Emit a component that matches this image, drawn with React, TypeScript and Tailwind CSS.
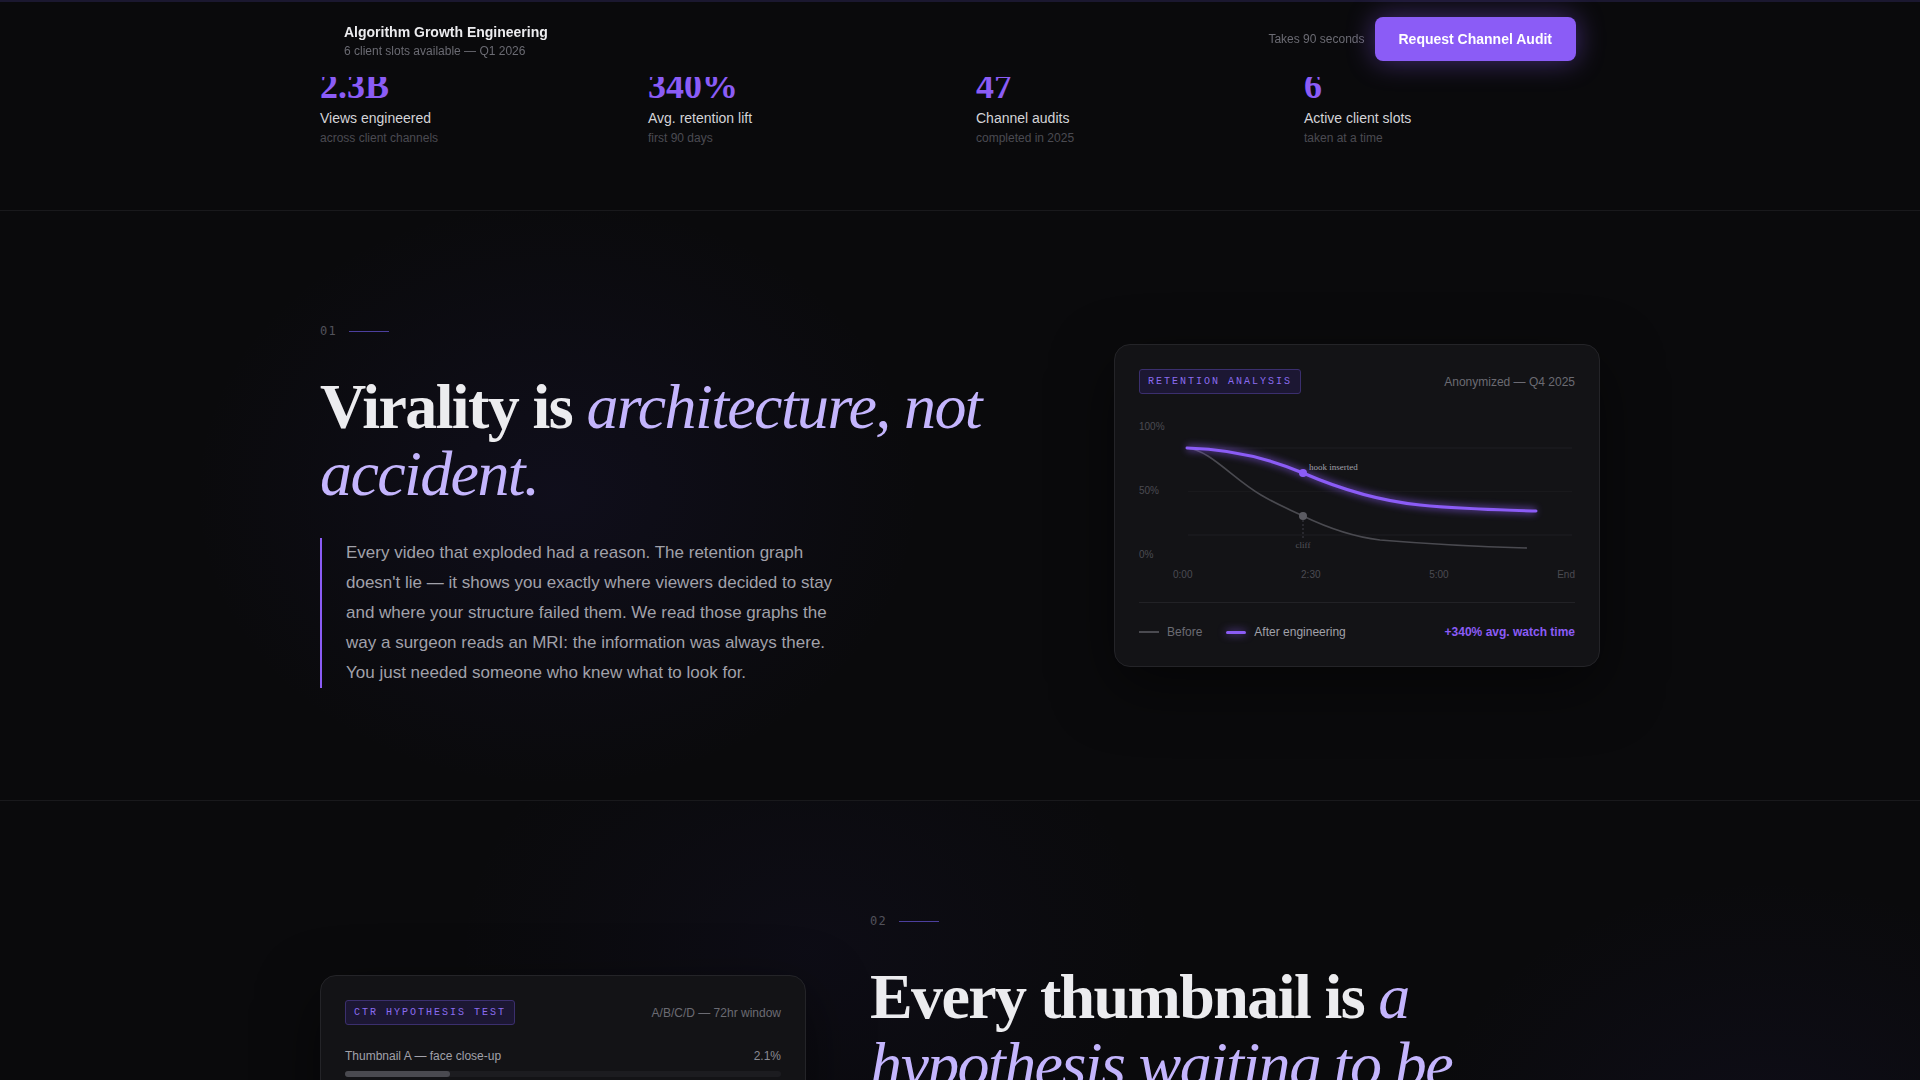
import React from "react";

const stats = [
  { value: "2.3B", label: "Views engineered", sub: "across client channels" },
  { value: "340%", label: "Avg. retention lift", sub: "first 90 days" },
  { value: "47", label: "Channel audits", sub: "completed in 2025" },
  { value: "6", label: "Active client slots", sub: "taken at a time" },
];

const thumbs = [
  { name: "Thumbnail A — face close-up", ctr: "2.1%", pct: 24, win: false },
  { name: "Thumbnail B — text overlay", ctr: "3.4%", pct: 38, win: false },
  { name: "Thumbnail C — contrast split", ctr: "5.2%", pct: 57, win: false },
  { name: "Thumbnail D — curiosity gap", ctr: "9.1%", pct: 100, win: true },
];

function SectionLabel({ n }: { n: string }) {
  return (
    <div className="flex items-center gap-3">
      <span className="font-['DejaVu_Sans_Mono',monospace] text-[12px] leading-4 tracking-[0.1em] text-[#52525b]">
        {n}
      </span>
      <span className="h-px w-10 bg-[#4c3f9e]" />
    </div>
  );
}

function Badge({ children }: { children: React.ReactNode }) {
  return (
    <span className="inline-block rounded-[3px] border border-[#3b2f6e] bg-[#1c1733] px-2 py-1 font-['Liberation_Mono',monospace] text-[10px] leading-[15px] tracking-[0.2em] text-[#8b6cf0]">
      {children}
    </span>
  );
}

function RetentionChart() {
  return (
    <div className="mt-[27px]">
      <div className="flex">
        <div className="flex h-[140px] w-[34px] flex-col justify-between text-[10px] leading-3 text-[#4b4b52]">
          <span>100%</span>
          <span>50%</span>
          <span>0%</span>
        </div>
        <svg width="402" height="140" viewBox="0 0 402 140" className="block">
          <defs>
            <filter id="glow" x="-20%" y="-50%" width="140%" height="200%">
              <feGaussianBlur stdDeviation="3.5" />
            </filter>
          </defs>
          <line x1="15" y1="27" x2="399" y2="27" stroke="#1f1f23" strokeWidth="1" />
          <line x1="15" y1="70.5" x2="399" y2="70.5" stroke="#19191c" strokeWidth="1" />
          <line x1="15" y1="114" x2="399" y2="114" stroke="#1f1f23" strokeWidth="1" />
          {/* before */}
          <path
            d="M14,27 C37,29 60,58 88,74 C105,84 120,90 130,95 C157,108 182,116 207,119 C267,124 317,126 354,127"
            fill="none"
            stroke="#4a4a50"
            strokeWidth="1.6"
          />
          <line x1="130" y1="99" x2="130" y2="117" stroke="#3f3f46" strokeWidth="1" strokeDasharray="2 2" />
          <circle cx="130" cy="95" r="4" fill="#5b5b62" />
          <text
            x="130"
            y="127"
            textAnchor="middle"
            fontFamily="'Liberation Serif', serif"
            fontSize="9"
            fill="#55555c"
          >
            cliff
          </text>
          {/* after */}
          <path
            d="M14,27 C57,28 97,38 130,52 C167,68 207,80 247,84 C287,88 327,89 363,90"
            fill="none"
            stroke="#8b5cf6"
            strokeWidth="6"
            opacity="0.55"
            filter="url(#glow)"
          />
          <path
            d="M14,27 C57,28 97,38 130,52 C167,68 207,80 247,84 C287,88 327,89 363,90"
            fill="none"
            stroke="#8b5cf6"
            strokeWidth="3"
            strokeLinecap="round"
          />
          <circle cx="130" cy="52" r="4" fill="#8b5cf6" />
          <text
            x="136"
            y="49"
            fontFamily="'Liberation Serif', serif"
            fontSize="9"
            fill="#a1a1aa"
          >
            hook inserted
          </text>
        </svg>
      </div>
      <div className="mt-2 flex justify-between pl-[34px] text-[10px] leading-3 text-[#4b4b52]">
        <span>0:00</span>
        <span>2:30</span>
        <span>5:00</span>
        <span>End</span>
      </div>
    </div>
  );
}

function RetentionCard() {
  return (
    <div className="rounded-2xl border border-[#242428] bg-[#131316] p-6 shadow-[0_20px_60px_rgba(0,0,0,0.5)]">
      <div className="flex items-center justify-between">
        <Badge>RETENTION ANALYSIS</Badge>
        <span className="text-[12px] text-[#6b6b73]">Anonymized — Q4 2025</span>
      </div>
      <RetentionChart />
      <div className="mt-[21px] flex items-center justify-between border-t border-[#222226] pt-[19px]">
        <div className="flex items-center gap-6">
          <div className="flex items-center gap-2">
            <span className="h-0.5 w-5 bg-[#4a4a50]" />
            <span className="text-[12px] leading-5 text-[#6b6b73]">Before</span>
          </div>
          <div className="flex items-center gap-2">
            <span className="h-[3px] w-5 rounded-full bg-[#8b5cf6] shadow-[0_0_8px_rgba(139,92,246,0.8)]" />
            <span className="text-[12px] leading-5 text-[#a1a1aa]">After engineering</span>
          </div>
        </div>
        <span className="text-[12px] font-bold leading-5 text-[#8b5cf6]">+340% avg. watch time</span>
      </div>
    </div>
  );
}

function CtrCard() {
  return (
    <div className="mt-[62px] rounded-2xl border border-[#242428] bg-[#131316] p-6 shadow-[0_20px_60px_rgba(0,0,0,0.5)]">
      <div className="flex items-center justify-between">
        <Badge>CTR HYPOTHESIS TEST</Badge>
        <span className="text-[12px] text-[#6b6b73]">A/B/C/D — 72hr window</span>
      </div>
      <div className="mt-[23px] flex flex-col gap-3">
        {thumbs.map((t) => (
          <div key={t.name}>
            <div className="flex items-center justify-between text-[12px] leading-4">
              <span className={t.win ? "text-[#c4b5fd]" : "text-[#a1a1aa]"}>{t.name}</span>
              <span className={t.win ? "font-bold text-[#8b5cf6]" : "text-[#8a8a92]"}>{t.ctr}</span>
            </div>
            <div className="mt-[7px] h-1.5 w-full rounded-full bg-[#1c1c20]">
              <div
                className={t.win ? "h-full rounded-full bg-[#8b5cf6]" : "h-full rounded-full bg-[#4a4a50]"}
                style={{ width: `${t.pct}%` }}
              />
            </div>
          </div>
        ))}
      </div>
    </div>
  );
}

export default function App() {
  return (
    <div className="relative h-[1080px] overflow-hidden bg-[#0a0a0c] font-['Liberation_Sans',Arial,sans-serif] text-[#e4e4e7]">
      {/* fixed top bar */}
      <header className="absolute inset-x-0 top-0 z-20 border-t-2 border-[#1b1830] bg-[#0a0a0c]/[0.97] backdrop-blur">
        <div className="mx-auto flex max-w-[1280px] items-center justify-between px-6 pb-4 pt-[15px]">
          <div className="pt-[3px]">
            <div className="text-[14px] font-bold leading-5 text-[#ececef]">Algorithm Growth Engineering</div>
            <div className="mt-px text-[12px] leading-4 text-[#6b6b73]">6 client slots available — Q1 2026</div>
          </div>
          <div className="flex items-center gap-[10px]">
            <span className="text-[12px] text-[#6b6b73]">Takes 90 seconds</span>
            <button className="h-11 rounded-lg bg-[#8b5cf6] px-6 text-[14px] font-bold text-white shadow-[0_0_28px_rgba(139,92,246,0.45)]">
              Request Channel Audit
            </button>
          </div>
        </div>
      </header>

      {/* stats */}
      <section className="border-b border-[#19191c]">
        <div className="mx-auto grid max-w-[1280px] grid-cols-4 gap-8 pb-16 pt-[68px]">
          {stats.map((s) => (
            <div key={s.label}>
              <div className="font-['Liberation_Serif',serif] text-[36px] font-bold leading-9 text-[#8b5cf6]">
                {s.value}
              </div>
              <div className="mt-[4px] text-[14px] leading-5 text-[#d4d4d8]">{s.label}</div>
              <div className="mt-[2px] text-[12px] leading-4 text-[#4b4b52]">{s.sub}</div>
            </div>
          ))}
        </div>
      </section>

      {/* 01 */}
      <section className="border-b border-[#19191c] bg-[radial-gradient(ellipse_520px_420px_at_29%_48%,rgba(60,48,150,0.11),transparent_70%)]">
        <div className="mx-auto grid max-w-[1280px] grid-cols-[1fr_486px] items-center gap-16 py-28">
          <div>
            <SectionLabel n="01" />
            <h2 className="mt-[34px] font-['Liberation_Serif',serif] text-[64px] leading-[1.05] tracking-[-0.025em]">
              <span className="font-bold text-[#ececef]">Virality is </span>
              <em className="font-normal text-[#c4b5fd]">architecture, not accident.</em>
            </h2>
            <p className="mt-[31px] max-w-[526px] border-l-2 border-[#8b5cf6] pl-6 text-[17px] leading-[30px] text-[#a1a1aa]">
              Every video that exploded had a reason. The retention graph doesn't lie — it shows you exactly where
              viewers decided to stay and where your structure failed them. We read those graphs the way a surgeon
              reads an MRI: the information was always there. You just needed someone who knew what to look for.
            </p>
          </div>
          <RetentionCard />
        </div>
      </section>

      {/* 02 */}
      <section className="bg-[radial-gradient(ellipse_500px_380px_at_42%_25%,rgba(60,48,150,0.07),transparent_70%),radial-gradient(ellipse_500px_400px_at_92%_60%,rgba(60,48,150,0.09),transparent_70%)]">
        <div className="mx-auto grid max-w-[1280px] grid-cols-[486px_1fr] items-start gap-16 py-28">
          <CtrCard />
          <div>
            <SectionLabel n="02" />
            <h2 className="mt-[34px] font-['Liberation_Serif',serif] text-[64px] leading-[1.05] tracking-[-0.025em]">
              <span className="font-bold text-[#ececef]">Every thumbnail is </span>
              <em className="font-normal text-[#c4b5fd]">a hypothesis waiting to be tested.</em>
            </h2>
            <p className="mt-[31px] max-w-[526px] border-l-2 border-[#8b5cf6] pl-6 text-[17px] leading-[30px] text-[#a1a1aa]">
              A single point of click-through rate compounds into millions of impressions. We design thumbnails the
              way a lab runs experiments: one variable at a time, measured against a control.
            </p>
          </div>
        </div>
      </section>
    </div>
  );
}
